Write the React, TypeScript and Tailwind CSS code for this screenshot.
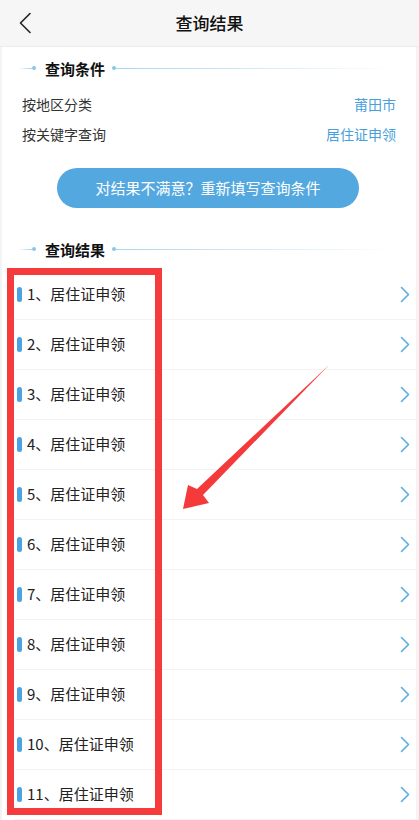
import React from "react";

const font = { fontFamily: '"Noto Sans CJK SC", "Noto Sans", sans-serif' };

function SectionTitle({ title }: { title: string }) {
  return (
    <div className="flex items-center h-full">
      <div className="ml-[16px] w-[14px] h-[1px] bg-gradient-to-r from-transparent to-[#9fd0ee]" />
      <div className="w-[4px] h-[4px] rounded-full bg-[#8cc6ea]" />
      <div className="ml-[9px] text-[15px] font-bold text-[#111] leading-none">{title}</div>
      <div className="ml-[7px] w-[4px] h-[4px] rounded-full bg-[#8cc6ea]" />
      <div className="w-[280px] h-[1px] bg-gradient-to-r from-[#a8d5f0] to-transparent" />
    </div>
  );
}

function Chevron() {
  return (
    <svg width="10" height="17" viewBox="0 0 10 17" fill="none">
      <path d="M1.5 1.5 L8.5 8.5 L1.5 15.5" stroke="#5aaee2" strokeWidth="1.6" strokeLinecap="round" strokeLinejoin="round" />
    </svg>
  );
}

export default function App() {
  const items = Array.from({ length: 11 }, (_, i) => i + 1);
  return (
    <div className="relative w-[419px] h-[820px] overflow-hidden bg-[#f4f4f4]" style={font}>
      <div className="h-[47px] bg-[#f6f6f6] border-b border-[#ececec] flex items-center justify-center relative">
        <svg className="absolute left-[18px] top-[12px]" width="14" height="22" viewBox="0 0 14 22" fill="none">
          <path d="M12 1.5 L2.5 11 L12 20.5" stroke="#222" strokeWidth="1.6" strokeLinecap="round" strokeLinejoin="round" />
        </svg>
        <div className="text-[17px] font-medium text-[#111]">查询结果</div>
      </div>
      <div className="ml-[2px] mr-[3px] bg-white h-[773px]">
        <div className="h-[42px]">
          <SectionTitle title="查询条件" />
        </div>
        <div className="h-[30px] flex items-center justify-between pl-[20px] pr-[20px] text-[14px]">
          <span className="text-[#333]">按地区分类</span>
          <span className="text-[#4a9fdb]">莆田市</span>
        </div>
        <div className="h-[30px] flex items-center justify-between pl-[20px] pr-[20px] text-[14px]">
          <span className="text-[#333]">按关键字查询</span>
          <span className="text-[#4a9fdb]">居住证申领</span>
        </div>
        <div className="mt-[19px] flex justify-center">
          <div className="ml-[-2px] w-[302px] h-[40px] rounded-full bg-[#53a8e0] flex items-center justify-center text-white text-[15px]">
            对结果不满意？重新填写查询条件
          </div>
        </div>
        <div className="mt-[20px] h-[42px]">
          <SectionTitle title="查询结果" />
        </div>
        <div>
          {items.map((n) => (
            <div key={n} className="h-[50px] ml-[13px] flex items-center border-b border-[#f3f3f3]">
              <div className="w-[5px] h-[15px] rounded-full bg-[#4aa3e0] ml-[2px]" />
              <div className="ml-[5px] text-[15px] text-[#222] flex-1">{n}、居住证申领</div>
              <div className="mr-[6px] flex items-center">
                <Chevron />
              </div>
            </div>
          ))}
        </div>
      </div>
      <div className="absolute left-[7px] top-[268px] w-[155px] h-[547px] border-[7px] border-[#f53b3b]" />
      <svg className="absolute left-0 top-0 pointer-events-none" width="419" height="820" viewBox="0 0 419 820">
        <polygon
          points="329,365 203,495 209,503 183,509 188,485 197,489"
          fill="#f43a3a"
        />
      </svg>
    </div>
  );
}
